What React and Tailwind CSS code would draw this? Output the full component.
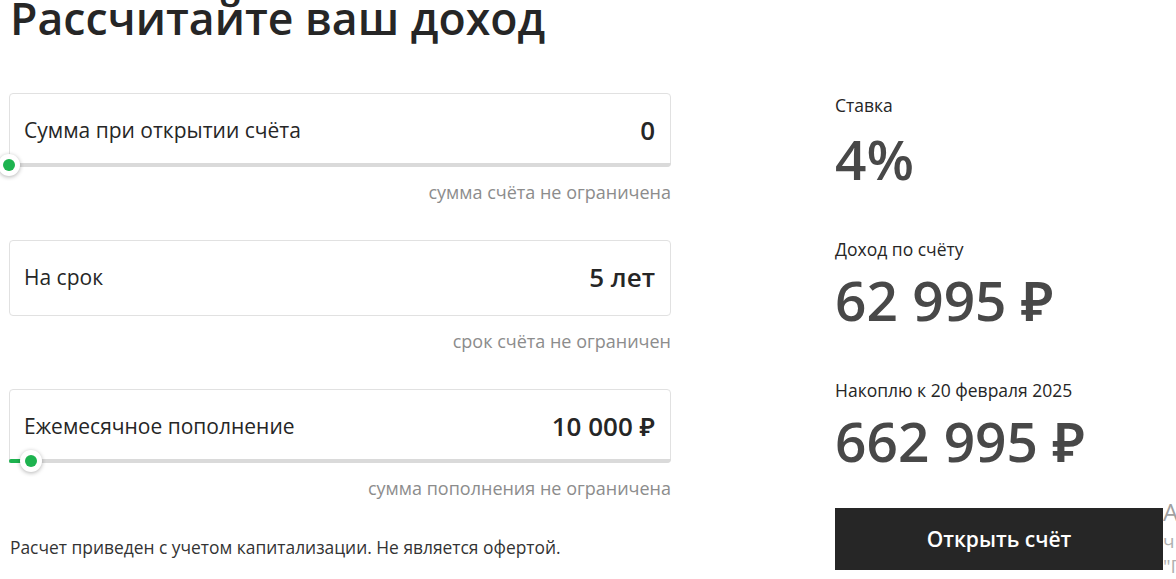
import React from 'react';

const font = { fontFamily: '"Open Sans", "Noto Sans", sans-serif' };

function Field({ label, value, hint, slider, thumbAt = 0 }) {
    return (
        <div className="flex flex-col">
            <div className="relative">
                <div className={`${slider ? 'h-[74px] pt-[2px]' : 'h-[76px]'} border border-[#e1e1e1] rounded-[4px] flex items-center justify-between pl-[14px] pr-[15px]`}>
                    <span className="text-[21px] text-[#262626]">{label}</span>
                    <span className="text-[26px] font-semibold text-[#262626]">{value}</span>
                </div>
                {slider && (
                    <>
                        <div className="absolute left-0 right-0 bottom-0 h-[4px] bg-[#dadada] rounded-br-[4px]" />
                        <div className="absolute left-0 bottom-0 h-[4px] bg-[#1db34f] rounded-l-[2px]" style={{ width: thumbAt }} />
                        <div
                            className="absolute bottom-[-9px] w-[22px] h-[22px] -ml-[11px] rounded-full bg-white shadow-[0_1px_4px_rgba(0,0,0,0.3)] flex items-center justify-center"
                            style={{ left: thumbAt }}
                        >
                            <div className="w-[12px] h-[12px] rounded-full bg-[#1db34f]" />
                        </div>
                    </>
                )}
            </div>
            <div className="mt-[13px] text-right text-[18px] text-[#8c8c8c] leading-[24px]">{hint}</div>
        </div>
    );
}

function Stat({ label, value, first }) {
    return (
        <div className={first ? 'mt-[1px]' : 'mt-[52px]'}>
            <div className="text-[17.5px] leading-[23px] text-[#262626]">{label}</div>
            <div className={`text-[55px] leading-none font-semibold text-[#484848] ${first ? 'mt-[14px]' : 'mt-[11px]'}`}>{value}</div>
        </div>
    );
}

export default function App() {
    return (
        <div className="relative w-[1176px] h-[579px] overflow-hidden bg-white" style={font}>
            <h1 className="ml-[10px] -mt-[4px] text-[44.6px] leading-none font-semibold text-[#262626]">Рассчитайте ваш доход</h1>
            <div className="flex mt-[52px]">
                <div className="ml-[9px] w-[662px] flex flex-col gap-[36px]">
                    <Field label="Сумма при открытии счёта" value="0" hint="сумма счёта не ограничена" slider thumbAt={0} />
                    <Field label="На срок" value="5 лет" hint="срок счёта не ограничен" />
                    <Field label="Ежемесячное пополнение" value="10 000 ₽" hint="сумма пополнения не ограничена" slider thumbAt={22} />
                    <p className="ml-[1px] text-[17.4px] leading-[23px] text-[#333333]">Расчет приведен с учетом капитализации. Не является офертой.</p>
                </div>
                <div className="ml-[164px] w-[328px] flex flex-col">
                    <Stat first label="Ставка" value="4%" />
                    <Stat label="Доход по счёту" value="62 995 ₽" />
                    <Stat label="Накоплю к 20 февраля 2025" value="662 995 ₽" />
                    <button className="mt-[40px] h-[62px] w-full bg-[#262626] text-white text-[21px] font-semibold pt-[2px]">Открыть счёт</button>
                </div>
            </div>
            <div className="absolute left-[1163px] top-[500px] text-[#a0a0a0] leading-none">
                <div className="text-[24px]">А</div>
                <div className="mt-[8px] text-[19px] text-[#b0b0b0]">ч</div>
                <div className="mt-[6px] text-[19px] text-[#b0b0b0]">"Г</div>
            </div>
        </div>
    );
}
